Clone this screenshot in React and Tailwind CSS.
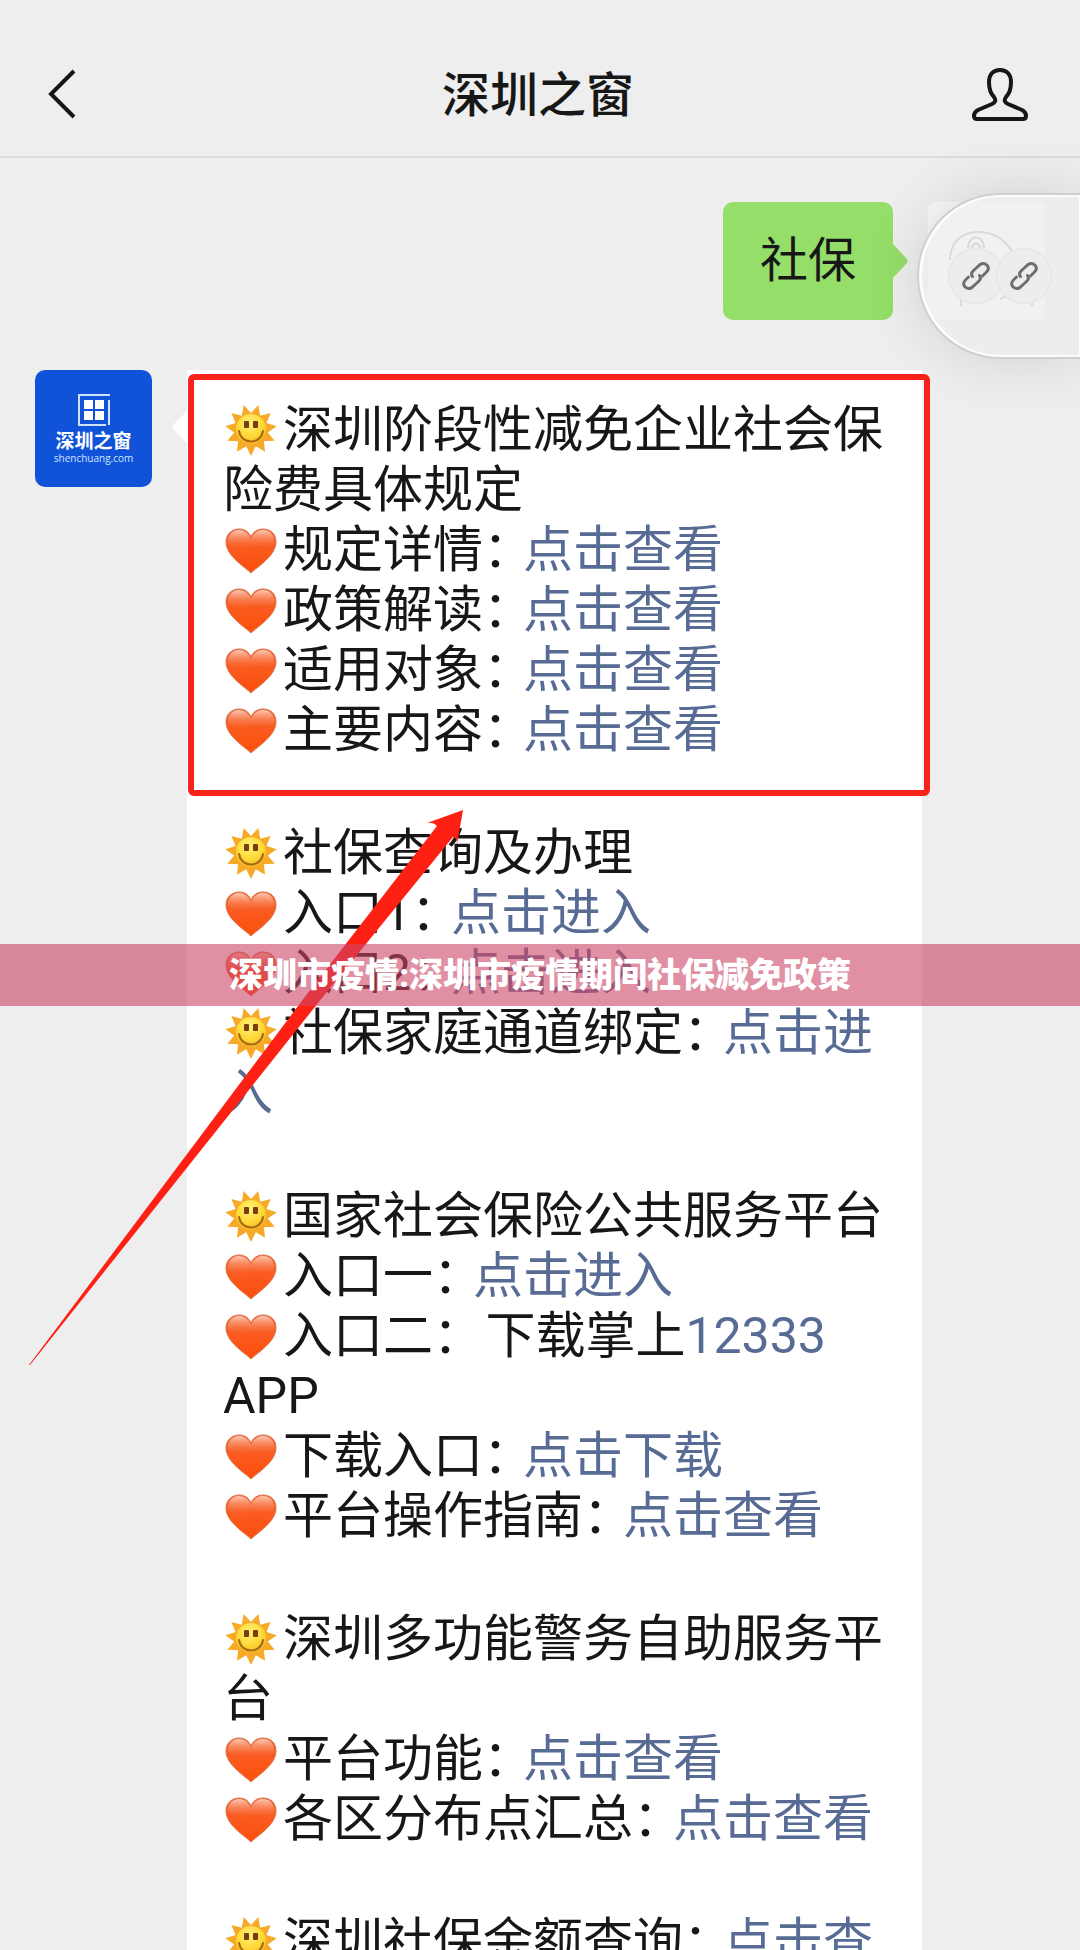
const groups = [
  {
    id: "policy",
    marked: true,
    lines: [
      { icon: "sun", text: "深圳阶段性减免企业社会保险费具体规定" },
      { icon: "heart", text: "规定详情", link: "点击查看" },
      { icon: "heart", text: "政策解读", link: "点击查看" },
      { icon: "heart", text: "适用对象", link: "点击查看" },
      { icon: "heart", text: "主要内容", link: "点击查看" },
    ],
  },
  {
    id: "query",
    lines: [
      { icon: "sun", text: "社保查询及办理" },
      { icon: "heart", text: "入口1", link: "点击进入" },
      { icon: "heart", text: "入口2", link: "点击进入" },
      { icon: "sun", text: "社保家庭通道绑定", link: "点击进入" },
    ],
  },
  {
    id: "national",
    lines: [
      { icon: "sun", text: "国家社会保险公共服务平台" },
      { icon: "heart", text: "入口一", link: "点击进入" },
      { icon: "heart", text: "入口二", before: " 下载掌上", link: "12333", after: " APP" },
      { icon: "heart", text: "下载入口", link: "点击下载" },
      { icon: "heart", text: "平台操作指南", link: "点击查看" },
    ],
  },
  {
    id: "police",
    lines: [
      { icon: "sun", text: "深圳多功能警务自助服务平台" },
      { icon: "heart", text: "平台功能", link: "点击查看" },
      { icon: "heart", text: "各区分布点汇总", link: "点击查看" },
    ],
  },
  {
    id: "balance",
    lines: [{ icon: "sun", text: "深圳社保余额查询", link: "点击查" }],
  },
];

// eleven-pointed outline used behind the sun's face
const sunPoints = Array.from({ length: 22 }, (_, i) => {
  const r = i % 2 === 0 ? 26 : 17;
  const a = Math.PI / 2 + (i * Math.PI) / 11;
  return `${26 + r * Math.cos(a)},${26 + r * Math.sin(a)}`;
}).join(" ");

function Defs() {
  return (
    <svg className="absolute h-0 w-0" aria-hidden="true">
      <defs>
        <radialGradient id="sunFace" cx="0.45" cy="0.3" r="0.75">
          <stop offset="0" stopColor="#fff27a" />
          <stop offset="0.6" stopColor="#fdd835" />
          <stop offset="1" stopColor="#f5b01c" />
        </radialGradient>
        <linearGradient id="heartFill" x1="0" y1="0" x2="0" y2="1">
          <stop offset="0" stopColor="#f0683c" />
          <stop offset="0.45" stopColor="#fb5a1e" />
          <stop offset="1" stopColor="#fc4f0c" />
        </linearGradient>
        <linearGradient id="heartShine" x1="0" y1="0" x2="0" y2="1">
          <stop offset="0" stopColor="#ffd9c8" stopOpacity="0.85" />
          <stop offset="1" stopColor="#ff7a48" stopOpacity="0" />
        </linearGradient>
      </defs>
    </svg>
  );
}

function Sun() {
  return (
    <svg viewBox="0 0 52 52" className="-my-2 h-[52px] w-[52px]" aria-hidden="true">
      <polygon points={sunPoints} fill="#f7a928" />
      <circle cx="26" cy="25" r="15" fill="url(#sunFace)" />
      <rect x="19" y="17" width="5" height="7" rx="1" fill="#7a3d10" />
      <rect x="28" y="17" width="5" height="7" rx="1" fill="#7a3d10" />
      <path d="M14 27c2 14 22 14 24 0" fill="none" stroke="#a8681a" strokeWidth="2" strokeLinecap="round" />
    </svg>
  );
}

function Heart() {
  return (
    <svg viewBox="0 0 52 52" className="-my-2 h-[52px] w-[52px]" aria-hidden="true">
      <path
        d="M26 49C20 43 1 32 1 18C1 10 7 5 14 5C20 5 24 8 26 13C28 8 32 5 38 5C46 5 51 10 51 18C51 32 32 43 26 49Z"
        fill="url(#heartFill)"
        stroke="#d9774f"
        strokeWidth="1"
      />
      <path
        d="M3 19C2 11 8 6 14 6C20 6 24 10 26 15C28 10 32 6 38 6C45 6 50 11 49 19C42 26 34 19 26 22C18 25 9 26 3 19Z"
        fill="url(#heartShine)"
      />
    </svg>
  );
}

function ChainIcon() {
  return (
    <svg viewBox="0 0 28 28" className="h-7 w-7" fill="none" stroke="#6e6e6e" strokeWidth="3" strokeLinecap="round" strokeLinejoin="round" aria-hidden="true">
      <path d="M10.500 14.500C9 12.500 9.500 10.500 11 9L17.500 3C20 0.800 23 1.200 25 3.200C27 5.400 26.500 8 24.500 10L20.500 14" />
      <path d="M17.500 13.500C19 15.500 18.500 17.500 17 19L10.500 25C8 27.200 5 26.800 3 24.800C1 22.600 1.500 20 3.500 18L6.500 15" />
    </svg>
  );
}

function MessageLine({ line }) {
  return (
    <p>
      <span className="-mt-2 inline-flex w-[60px] pl-0.5 align-middle leading-none">
        {line.icon === "sun" ? <Sun /> : <Heart />}
      </span>
      {line.text}
      {line.link && (
        <>
          <span className="inline-block w-10">：</span>
          {line.before}
          <a href="#" className="text-[#576b95]">
            {line.link}
          </a>
          {line.after}
        </>
      )}
    </p>
  );
}

function Header() {
  return (
    <header className="flex h-[158px] shrink-0 items-center justify-between border-b-2 border-[#dcdcdc] pt-8 pr-[52px] pl-12">
      <button type="button" aria-label="返回" className="w-14">
        <svg viewBox="0 0 28 50" className="h-[50px] w-7" fill="none" stroke="#161616" strokeWidth="4" aria-hidden="true">
          <path d="M26 2L3 25L26 48" />
        </svg>
      </button>
      <h1 className="pt-1 text-5xl leading-[60px] font-medium">深圳之窗</h1>
      <button type="button" aria-label="账号" className="w-14">
        <svg viewBox="0 0 56 54" className="h-[54px] w-14" fill="none" stroke="#161616" strokeWidth="4" strokeLinejoin="round" aria-hidden="true">
          <path d="M28 3C21 3 17 8 17 15C17 22 19 27 22 30C24 33 24 35 20 37L6 43C3 44.500 2 46 2 49Q2 52 5 52H51Q54 52 54 49C54 46 53 44.500 50 43L36 37C32 35 32 33 34 30C37 27 39 22 39 15C39 8 35 3 28 3Z" />
        </svg>
      </button>
    </header>
  );
}

function Logo() {
  return (
    <div className="flex h-[117px] w-[117px] shrink-0 flex-col items-center rounded-[10px] bg-[#1053d8] pt-6 text-white">
      <svg viewBox="0 0 32 32" className="h-8 w-8" aria-hidden="true">
        <path d="M32 1H1V31H28M31 6V31" fill="none" stroke="#cfe3ff" strokeWidth="2" />
        <path d="M6 6h9v9H6zM17 6h9v9h-9zM6 17h9v9H6zM17 17h9v9h-9z" fill="#fff" />
      </svg>
      <span className="mt-1.5 text-[19px] leading-5 font-bold">深圳之窗</span>
      <span className="font-['Open_Sans',sans-serif] text-[10px] leading-3 text-[#cfe3ff]">shenchuang.com</span>
    </div>
  );
}

function FloatingPill() {
  return (
    <div className="absolute top-[193px] right-0 flex h-[166px] w-[163px] items-center rounded-l-full border-2 border-r-0 border-[#cfcfcf] bg-[#ededed]/60 pl-[29px] shadow-[0_0_60px_rgba(0,0,0,0.12),inset_1px_0_0_2px_#fcfcfc]">
      <button type="button" aria-label="链接一" className="flex h-14 w-14 items-center justify-center rounded-full border border-[#e2e2e2] bg-[#ededed]">
        <ChainIcon />
      </button>
      <button type="button" aria-label="链接二" className="-ml-2 flex h-14 w-14 items-center justify-center rounded-full border border-[#e2e2e2] bg-[#ededed]">
        <ChainIcon />
      </button>
    </div>
  );
}

export default function App() {
  return (
    <div className="relative flex h-screen flex-col overflow-hidden bg-[#eeeeee] font-['Roboto','Noto_Sans_CJK_SC',sans-serif] text-[#171717]">
      <Defs />
      <Header />

      <main className="flex flex-col gap-[50px] px-[35px] pt-11 text-[50px] leading-[60px]">
        <div className="flex justify-end gap-[35px]">
          <div className="relative flex h-[118px] items-center rounded-[10px] bg-[#95de69] px-[37px] text-5xl">
            社保
            <svg viewBox="0 0 15 34" className="absolute top-[42px] left-full h-[34px] w-[15px]" aria-hidden="true">
              <path d="M0 0L13 14Q16 17 13 20L0 34Z" fill="#95de69" />
            </svg>
          </div>
          <svg viewBox="0 0 117 118" className="h-[118px] w-[117px] shrink-0 rounded-lg bg-[#f7f7f7]" fill="none" stroke="#bcbcbc" strokeWidth="2" aria-hidden="true">
            <path d="M22 58C22 40 34 30 50 30C66 30 78 38 84 50M72 97C80 94 86 90 88 84M33 98V104M104 98V104M64 74H70M64 78H70" />
            <path d="M40 46C40 32 56 32 56 46M44 46C44 40 52 40 52 46" />
          </svg>
        </div>

        <div className="flex items-start gap-[35px]">
          <Logo />
          <div className="relative mr-[123px] min-w-0 flex-1 space-y-[63px] bg-white px-9 pt-[30px] pb-9">
            <svg viewBox="0 0 15 32" className="absolute top-[41px] right-full h-8 w-[15px]" aria-hidden="true">
              <path d="M15 0L2 13Q-1 16 2 19L15 32Z" fill="#fff" />
            </svg>
            {groups.map((group) => (
              <section key={group.id} className="relative">
                {group.marked && (
                  <div className="pointer-events-none absolute -top-[26px] -right-11 -bottom-9 -left-[35px] rounded-md border-[6px] border-[#f7231a]" />
                )}
                {group.lines.map((line) => (
                  <MessageLine key={line.text} line={line} />
                ))}
              </section>
            ))}
          </div>
        </div>
      </main>

      <FloatingPill />

      {/* arrow pointing at the marked block */}
      <svg viewBox="0 0 436 556" className="pointer-events-none absolute top-[809px] left-7 h-[556px] w-[436px]" aria-hidden="true">
        <path d="M1 556L276 189L409 17Q405 13 399 14L435 1L429 35Q429 29 425 28L294 189L2 556Z" fill="#ff2014" />
      </svg>

      <div className="absolute inset-x-0 top-1/2 flex h-[62px] -translate-y-1/2 items-center justify-center bg-[rgba(205,70,103,0.6)] text-[34px] font-black text-white">
        深圳市疫情:深圳市疫情期间社保减免政策
      </div>
    </div>
  );
}
